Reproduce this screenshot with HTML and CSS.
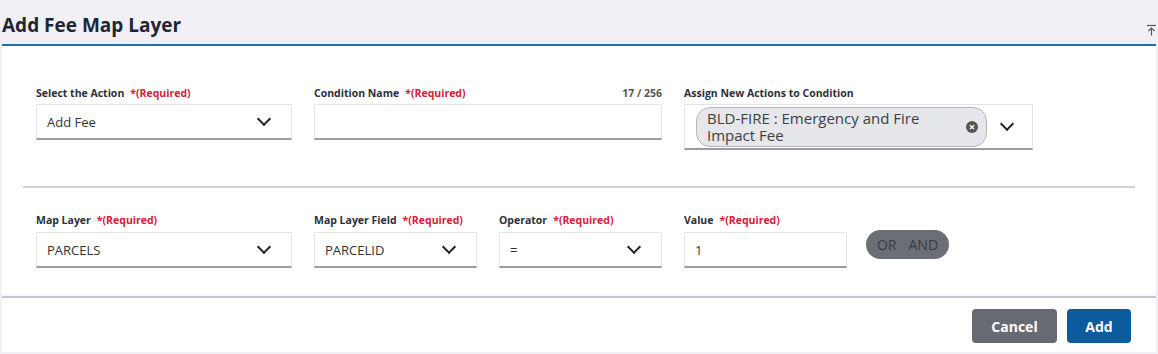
FILE: index.html
```html
<!DOCTYPE html>
<html lang="en">
<head>
  <meta charset="UTF-8">
  <title>Add Fee Map Layer</title>
  <link rel="stylesheet" href="styles.css">
</head>
<body>
  <div class="page">
    <div class="page-header">
      <h1 class="title">Add Fee Map Layer</h1>
      <button class="collapse-btn" title="Collapse">
        <svg width="11" height="12" viewBox="0 0 11 12"><path d="M1 1.5h9" stroke="#555" stroke-width="1.2" fill="none"/><path d="M5.5 4v7.5M2.3 7.2l3.2-3.2 3.2 3.2" stroke="#555" stroke-width="1.2" fill="none"/></svg>
      </button>
    </div>
    <div class="panel">
      <div class="panel-body">
        <div class="row">
          <div class="field w-action">
            <div class="label-row"><label>Select the Action</label><span class="req">*(Required)</span></div>
            <div class="control select"><span>Add Fee</span><span class="chev"></span></div>
          </div>
          <div class="field w-name">
            <div class="label-row"><label>Condition Name</label><span class="req">*(Required)</span><span class="count">17 / 256</span></div>
            <div class="control"></div>
          </div>
          <div class="field w-assign">
            <div class="label-row"><label>Assign New Actions to Condition</label></div>
            <div class="control select multi">
              <div class="chip">
                <span class="chip-text">BLD-FIRE : Emergency and Fire Impact Fee</span>
                <span class="chip-x">&times;</span>
              </div>
              <span class="chev"></span>
            </div>
          </div>
        </div>
        <hr class="divider">
        <div class="row row-map">
          <div class="field w-layer">
            <div class="label-row"><label>Map Layer</label><span class="req">*(Required)</span></div>
            <div class="control select"><span>PARCELS</span><span class="chev"></span></div>
          </div>
          <div class="field w-small">
            <div class="label-row"><label>Map Layer Field</label><span class="req">*(Required)</span></div>
            <div class="control select"><span>PARCELID</span><span class="chev"></span></div>
          </div>
          <div class="field w-small">
            <div class="label-row"><label>Operator</label><span class="req">*(Required)</span></div>
            <div class="control select"><span>=</span><span class="chev"></span></div>
          </div>
          <div class="field w-small">
            <div class="label-row"><label>Value</label><span class="req">*(Required)</span></div>
            <div class="control"><span>1</span></div>
          </div>
          <div class="toggle"><span>OR</span><span>AND</span></div>
        </div>
      </div>
      <div class="panel-footer">
        <button class="btn btn-cancel">Cancel</button>
        <button class="btn btn-add">Add</button>
      </div>
    </div>
  </div>
</body>
</html>
```

FILE: styles.css
```css
body {
  margin: 0;
  background-color: #f1f0f5;
  font-family: "Open Sans", Arial, sans-serif;
  color: #333;
}

.page {
  padding: 0 2px 0 2px;
  width: 1154px;
}

.page-header {
  display: flex;
  justify-content: space-between;
  align-items: flex-end;
  height: 44px;
  border-bottom: 2px solid #1f6fb5;
}

.title {
  margin: 0 0 6px 0;
  font-size: 19px;
  font-weight: 700;
  color: #1f2633;
  line-height: 26px;
}

.collapse-btn {
  border: none;
  background: none;
  padding: 0;
  margin: 0 -2px 8px 0;
  width: 12px;
  height: 12px;
  display: flex;
}

.panel {
  background-color: #fff;
  height: 306px;
  display: flex;
  flex-direction: column;
}

.panel-body {
  padding: 40px 20px 0 34px;
  height: 210px;
  border-bottom: 2px solid #c5c8d2;
  box-shadow: inset 0 -6px 6px -6px rgba(0, 0, 0, 0.06);
}

.row {
  display: flex;
  gap: 22px;
  align-items: flex-start;
}

.field {
  display: flex;
  flex-direction: column;
}

.w-action { width: 256px; }
.w-name { width: 348px; }
.w-assign { width: 349px; }
.w-layer { width: 256px; }
.w-small { width: 163px; }

.label-row {
  display: flex;
  align-items: baseline;
  height: 14px;
  margin-bottom: 4px;
  font-size: 10.5px;
  font-weight: 700;
  line-height: 14px;
}

.row-map .label-row {
  margin-bottom: 5px;
}

.label-row label {
  color: #2a2f3a;
}

.req {
  color: #d6213b;
  margin-left: 6px;
}

.count {
  margin-left: auto;
  color: #555;
}

.control {
  box-sizing: border-box;
  height: 36px;
  background: #fff;
  border: 1px solid #e3e4e8;
  border-bottom: 2px solid #9a9ca3;
  border-radius: 2px 2px 0 0;
  display: flex;
  align-items: center;
  padding: 0 10px;
  font-size: 13px;
  color: #333;
}

.select {
  justify-content: space-between;
}

.chev {
  width: 8px;
  height: 8px;
  border-right: 2px solid #222;
  border-bottom: 2px solid #222;
  transform: rotate(45deg);
  margin: -5px 12px 0 0;
}

.multi {
  height: 46px;
  padding: 0 8px 0 11px;
}

.chip {
  box-sizing: border-box;
  width: 291px;
  height: 40px;
  background: #e6e7ea;
  border: 1px solid #b4b6bb;
  border-radius: 14px;
  display: flex;
  align-items: center;
  justify-content: space-between;
  padding: 0 8px 0 10px;
}

.chip-text {
  font-size: 15px;
  line-height: 17px;
  color: #404040;
  width: 230px;
}

.chip-x {
  width: 12px;
  height: 12px;
  border-radius: 50%;
  background: #555;
  color: #fff;
  font-size: 11px;
  font-weight: 700;
  line-height: 12px;
  text-align: center;
}

.divider {
  border: none;
  border-top: 2px solid #d3d3d3;
  margin: 36px 1px 25px -13px;
}

.toggle {
  margin: 17px 0 0 -3px;
  height: 29px;
  width: 83px;
  box-sizing: border-box;
  background: #6b6e75;
  border-radius: 15px;
  display: flex;
  align-items: center;
  justify-content: center;
  gap: 12px;
  font-size: 14px;
  color: #3a3c41;
}

.panel-footer {
  display: flex;
  justify-content: flex-end;
  gap: 10px;
  padding: 11px 25px 0 0;
}

.btn {
  height: 34px;
  border: none;
  border-radius: 4px;
  font-family: "Open Sans", Arial, sans-serif;
  font-size: 14px;
  font-weight: 700;
  color: #fff;
  cursor: pointer;
}

.btn-cancel {
  width: 85px;
  background-color: #676a73;
}

.btn-add {
  width: 64px;
  background-color: #0b5c9f;
}
```
